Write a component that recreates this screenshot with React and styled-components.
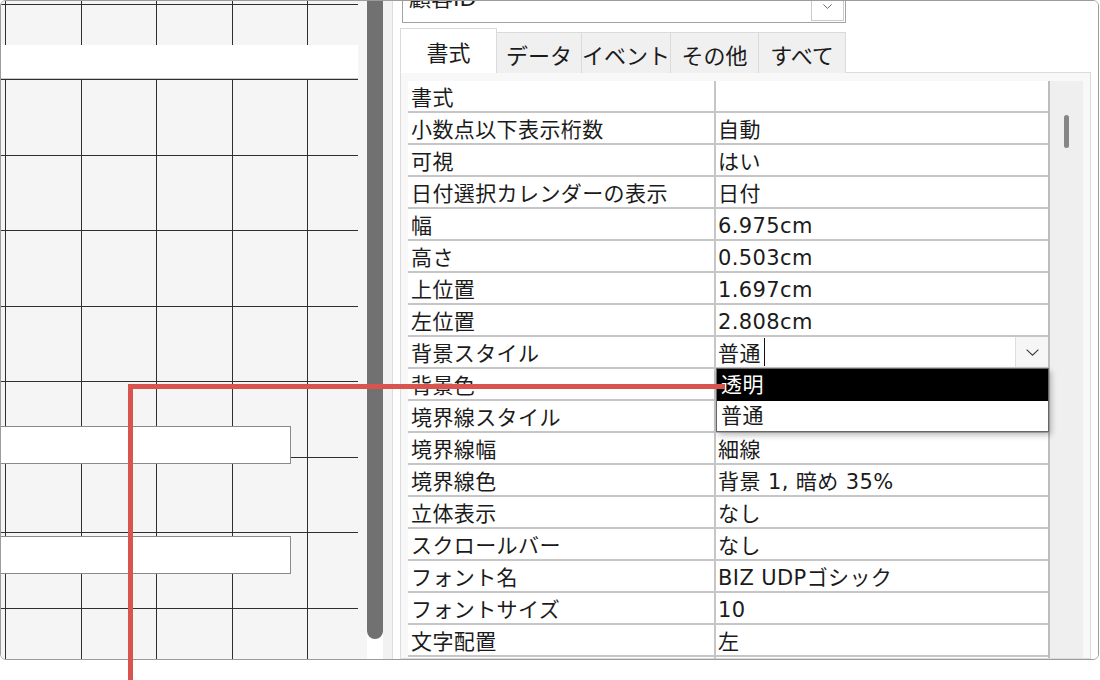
import React from "react";
import styled, { createGlobalStyle } from "styled-components";

const GlobalStyle = createGlobalStyle`
    html, body {
        margin: 0;
        padding: 0;
        background: #ffffff;
    }
    * {
        box-sizing: border-box;
    }
`;

const FONT = `"DejaVu Sans", "Noto Sans CJK JP", sans-serif`;

const Screen = styled.div`
    position: relative;
    width: 1100px;
    height: 680px;
    overflow: hidden;
    font-family: ${FONT};
    color: #1b1b1b;
`;

const Frame = styled.div`
    display: flex;
    width: 1099px;
    height: 660px;
    border: 1px solid #9c9c9c;
    border-radius: 6px;
    overflow: hidden;
`;

const DesignPane = styled.div`
    width: 366px;
    flex-shrink: 0;
    background: #f5f5f5;
`;

const Canvas = styled.div`
    position: relative;
    width: 357px;
    height: 100%;
    background-color: #f5f5f5;
    background-image:
        linear-gradient(to right, #2f2f2f 1px, transparent 1px),
        linear-gradient(to right, #2f2f2f 1px, transparent 1px),
        linear-gradient(to bottom, #2f2f2f 1px, transparent 1px),
        linear-gradient(to bottom, #2f2f2f 1px, transparent 1px);
    background-size: 151px 100%, 151px 100%, 100% 151px, 100% 151px;
    background-position: 4px 0, 80px 0, 0 3px, 0 78px;
    background-repeat: repeat-x, repeat-x, repeat-y, repeat-y;
`;

const Control = styled.div`
    position: absolute;
    left: -1px;
    top: ${(p) => p.$top}px;
    width: ${(p) => p.$width}px;
    height: ${(p) => p.$height}px;
    background: #ffffff;
    border: ${(p) => (p.$flat ? "none" : "1px solid #8a8a8a")};
    border-bottom: ${(p) => (p.$flat ? "1px solid #c9c9c9" : "1px solid #8a8a8a")};
`;

const Splitter = styled.div`
    width: 16px;
    height: 638px;
    flex-shrink: 0;
    background: #717171;
    border-radius: 0 0 8px 8px;
`;

const Gutter = styled.div`
    width: 10px;
    flex-shrink: 0;
    background: #f2f2f2;
    border-right: 1px solid #dcdcdc;
`;

const SheetPane = styled.div`
    flex: 1;
    display: flex;
    flex-direction: column;
    padding-left: 7px;
    background: #ffffff;
    min-width: 0;
`;

const ObjectCombo = styled.div`
    display: flex;
    width: 444px;
    height: 40px;
    margin: -18px 0 0 2px;
    border: 1px solid #a3a3a3;
    background: #ffffff;
    flex-shrink: 0;
`;

const ComboText = styled.div`
    flex: 1;
    padding-left: 6px;
    font-size: 22px;
    line-height: 30px;
`;

const ComboButton = styled.div`
    width: 33px;
    height: 37px;
    margin-right: 1px;
    display: flex;
    align-items: flex-end;
    justify-content: center;
    padding-bottom: 11px;
    border: 1px solid #cbcbcb;
    border-top: none;
`;

const TabStrip = styled.div`
    display: flex;
    align-items: flex-end;
    height: 45px;
    margin-top: 5px;
    flex-shrink: 0;
`;

const Tab = styled.div`
    width: ${(p) => p.$width}px;
    height: ${(p) => (p.$active ? 45 : 41)}px;
    display: flex;
    align-items: center;
    justify-content: center;
    padding-top: ${(p) => (p.$active ? 0 : 1)}px;
    font-size: 22px;
    background: ${(p) => (p.$active ? "#ffffff" : "#f0f0f0")};
    border: 1px solid #dadada;
    border-bottom: none;
    margin-right: -1px;
    position: relative;
    z-index: ${(p) => (p.$active ? 2 : 1)};
`;

const TabPage = styled.div`
    flex: 1;
    display: flex;
    margin: -1px 7px 0 0;
    padding: 8px 0 0 7px;
    border: 1px solid #dcdcdc;
    background: #f8f8f8;
    min-height: 0;
`;

const PropGrid = styled.div`
    position: relative;
    width: 642px;
    flex-shrink: 0;
    background: #ffffff;
    border-right: 2px solid #bdbdbd;
`;

const PropRow = styled.div`
    display: grid;
    grid-template-columns: 308px 1fr;
    height: 32px;
    border-bottom: 2px solid #c6c6c6;
    font-size: 21px;
    letter-spacing: 0.4px;
`;

const Label = styled.div`
    padding-left: 3px;
    border-right: 2px solid #c6c6c6;
    white-space: nowrap;
    overflow: hidden;
`;

const Value = styled.div`
    display: flex;
    align-items: stretch;
    padding-left: 2px;
    white-space: nowrap;
    overflow: hidden;
`;

const CellText = styled.span`
    display: block;
    padding-top: 2px;
    line-height: 30px;
    height: 32px;
`;

const Caret = styled.span`
    width: 1px;
    margin: 1px 0 1px 3px;
    background: #111111;
`;

const EditButton = styled.div`
    margin-left: auto;
    width: 33px;
    display: flex;
    align-items: center;
    justify-content: center;
    background: #f6f6f6;
    border-left: 1px solid #dedede;
`;

const DropList = styled.div`
    position: absolute;
    top: 287px;
    left: 308px;
    width: 333px;
    border: 1px solid #676767;
    background: #ffffff;
    box-shadow: 2px 3px 6px rgba(0, 0, 0, 0.28);
    z-index: 3;
`;

const DropItem = styled.div`
    height: ${(p) => (p.$selected ? 32 : 30)}px;
    padding-left: 4px;
    font-size: 21px;
    line-height: ${(p) => (p.$selected ? 32 : 30)}px;
    letter-spacing: 0.4px;
    background: ${(p) => (p.$selected ? "#000000" : "#ffffff")};
    color: ${(p) => (p.$selected ? "#ffffff" : "#1b1b1b")};
`;

const ScrollTrack = styled.div`
    position: relative;
    width: 33px;
    flex-shrink: 0;
    background: #efefef;
`;

const ScrollThumb = styled.div`
    position: absolute;
    left: 14px;
    top: 34px;
    width: 5px;
    height: 33px;
    border-radius: 3px;
    background: #868686;
`;

const Leader = styled.div`
    position: absolute;
    left: 128px;
    top: 384px;
    width: ${(p) => (p.$vertical ? 5 : 597)}px;
    height: ${(p) => (p.$vertical ? 296 : 5)}px;
    background: #d9534f;
    z-index: 10;
`;

const Chevron = ({ w = 13, h = 7 }) => (
    <svg width={w} height={h} viewBox="0 0 13 7">
        <polyline points="0.6,0.6 6.5,6.2 12.4,0.6" fill="none" stroke="#3a3a3a" strokeWidth="1.1" />
    </svg>
);

const tabs = [
    { name: "書式", width: 97, active: true },
    { name: "データ", width: 86 },
    { name: "イベント", width: 90 },
    { name: "その他", width: 89 },
    { name: "すべて", width: 88 },
];

const props = [
    ["書式", ""],
    ["小数点以下表示桁数", "自動"],
    ["可視", "はい"],
    ["日付選択カレンダーの表示", "日付"],
    ["幅", "6.975cm"],
    ["高さ", "0.503cm"],
    ["上位置", "1.697cm"],
    ["左位置", "2.808cm"],
    ["背景スタイル", "普通", "edit"],
    ["背景色", ""],
    ["境界線スタイル", ""],
    ["境界線幅", "細線"],
    ["境界線色", "背景 1, 暗め 35%"],
    ["立体表示", "なし"],
    ["スクロールバー", "なし"],
    ["フォント名", "BIZ UDPゴシック"],
    ["フォントサイズ", "10"],
    ["文字配置", "左"],
    ["", ""],
];

const App = () => {
    return (
        <>
            <GlobalStyle />
            <Screen>
                <Frame>
                    <DesignPane>
                        <Canvas>
                            <Control $top={44} $width={358} $height={34} $flat />
                            <Control $top={425} $width={291} $height={38} />
                            <Control $top={535} $width={291} $height={38} />
                        </Canvas>
                    </DesignPane>
                    <Splitter />
                    <Gutter />
                    <SheetPane>
                        <ObjectCombo>
                            <ComboText>顧客ID</ComboText>
                            <ComboButton>
                                <Chevron w={9} h={5} />
                            </ComboButton>
                        </ObjectCombo>
                        <TabStrip>
                            {tabs.map((t) => (
                                <Tab key={t.name} $width={t.width} $active={t.active}>
                                    {t.name}
                                </Tab>
                            ))}
                        </TabStrip>
                        <TabPage>
                            <PropGrid>
                                {props.map(([label, value, kind], i) => (
                                    <PropRow key={i}>
                                        <Label>
                                            <CellText>{label}</CellText>
                                        </Label>
                                        <Value>
                                            <CellText>{value}</CellText>
                                            {kind === "edit" && (
                                                <>
                                                    <Caret />
                                                    <EditButton>
                                                        <Chevron />
                                                    </EditButton>
                                                </>
                                            )}
                                        </Value>
                                    </PropRow>
                                ))}
                                <DropList>
                                    <DropItem $selected>透明</DropItem>
                                    <DropItem>普通</DropItem>
                                </DropList>
                            </PropGrid>
                            <ScrollTrack>
                                <ScrollThumb />
                            </ScrollTrack>
                        </TabPage>
                    </SheetPane>
                </Frame>
                <Leader />
                <Leader $vertical />
            </Screen>
        </>
    );
};

export default App;
